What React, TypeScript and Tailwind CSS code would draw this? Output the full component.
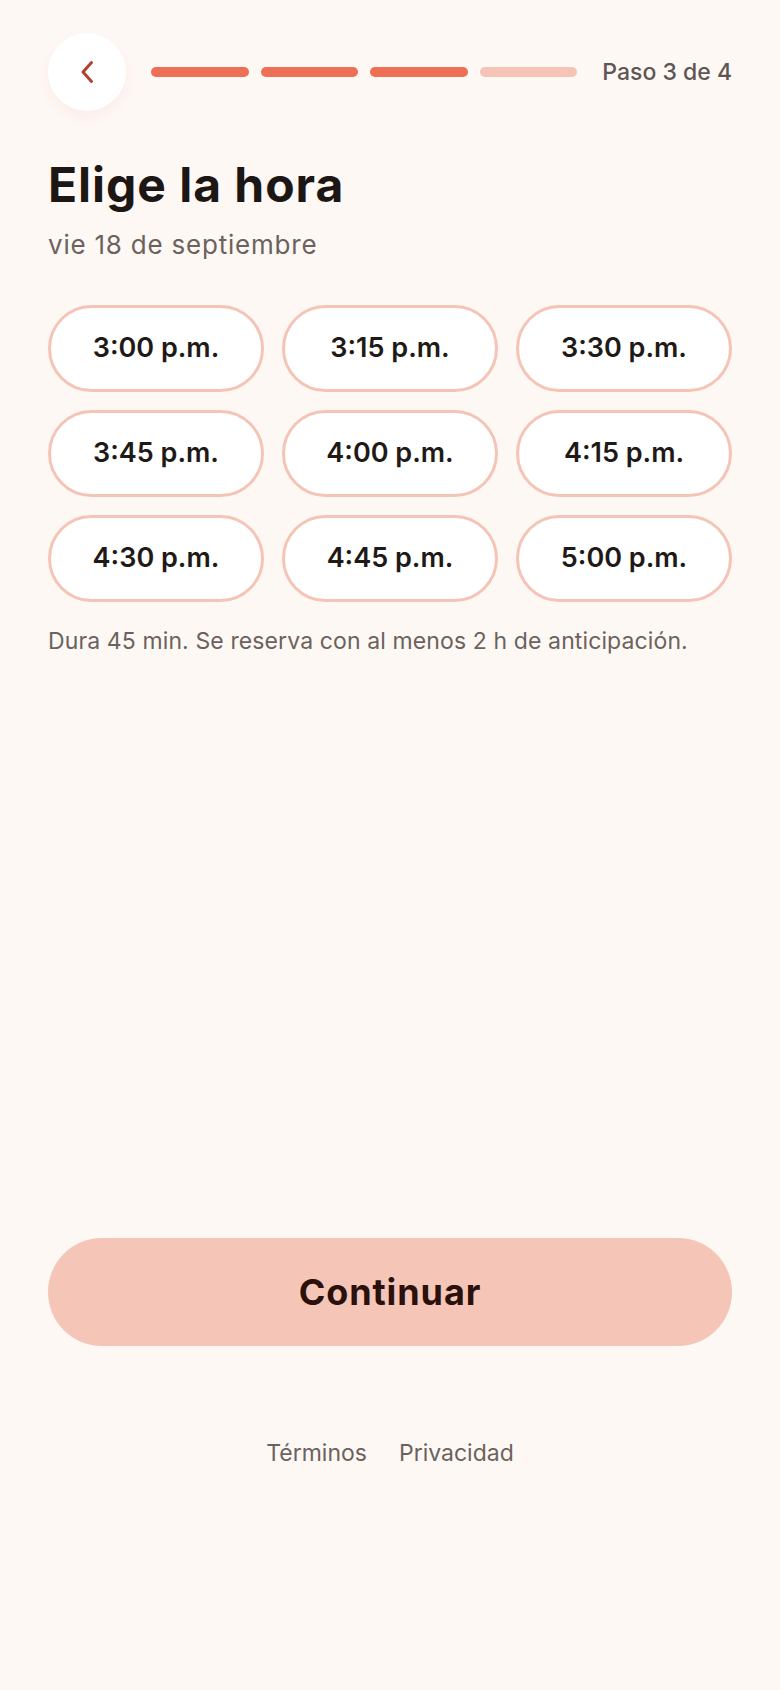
const times = [
  "3:00 p.m.",
  "3:15 p.m.",
  "3:30 p.m.",
  "3:45 p.m.",
  "4:00 p.m.",
  "4:15 p.m.",
  "4:30 p.m.",
  "4:45 p.m.",
  "5:00 p.m.",
];

const steps = [true, true, true, false];

export default function App() {
  return (
    <div
      className="min-h-screen flex flex-col bg-[#fef8f5] px-12"
      style={{ fontFamily: "Inter, 'Noto Sans', sans-serif" }}
    >
      {/* header */}
      <div className="flex items-center pt-[33px]">
        <button className="w-[78px] h-[78px] shrink-0 rounded-full bg-white flex items-center justify-center shadow-[0_6px_16px_rgba(230,140,120,0.10)]">
          <svg width="16" height="26" viewBox="0 0 16 26" fill="none">
            <path
              d="M12.5 3.5 L4 13 L12.5 22.5"
              stroke="#b0432f"
              strokeWidth="3"
              strokeLinecap="round"
              strokeLinejoin="round"
            />
          </svg>
        </button>
        <div className="flex-1 flex gap-3 ml-[25px]">
          {steps.map((done, i) => (
            <div
              key={i}
              className={`flex-1 h-[10px] rounded-full ${done ? "bg-[#ee6e56]" : "bg-[#f6c4b7]"}`}
            />
          ))}
        </div>
        <span className="ml-[25px] text-[23px] font-medium text-[#5e5652]">Paso 3 de 4</span>
      </div>

      {/* title */}
      <h1 className="mt-[50px] text-[48px] leading-none font-bold tracking-[0.02em] text-[#1c1614]">
        Elige la hora
      </h1>
      <p className="mt-[20px] text-[26px] leading-8 tracking-[0.03em] text-[#6b625d]">
        vie 18 de septiembre
      </p>

      {/* slots */}
      <div className="mt-[44px] grid grid-cols-3 gap-[18px]">
        {times.map((t) => (
          <button
            key={t}
            className="h-[87px] rounded-full border-[3px] border-[#f4c4b6] bg-white text-[27px] font-semibold text-[#1f1a17]"
          >
            {t}
          </button>
        ))}
      </div>

      <p className="mt-[25px] text-[23px] leading-7 tracking-[0.005em] text-[#6b625d]">
        Dura 45 min. Se reserva con al menos 2 h de anticipación.
      </p>

      <div className="flex-1" />

      <button className="h-[108px] w-full rounded-full bg-[#f5c5b8] text-[36px] font-bold tracking-[0.025em] text-[#2a110c]">
        Continuar
      </button>

      <div className="mt-[91px] pb-[221px] flex justify-center gap-[32px] text-[23px] leading-8 text-[#6b625d]">
        <a href="#">Términos</a>
        <a href="#">Privacidad</a>
      </div>
    </div>
  );
}
